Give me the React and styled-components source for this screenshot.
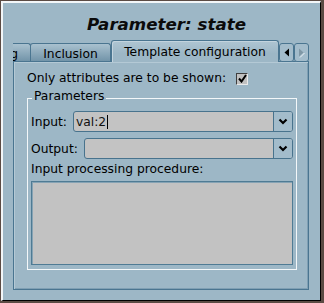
import styled, { createGlobalStyle } from "styled-components";

const GlobalStyle = createGlobalStyle`
  html, body {
    margin: 0;
    padding: 0;
    background: #5b4b44;
  }
  body {
    font-family: "DejaVu Sans", "Liberation Sans", sans-serif;
    color: #000;
  }
`;

export default function App() {
    return (
        <>
            <GlobalStyle />
            <Frame>
                <Dialog>
                    <Title>Parameter: state</Title>
                    <Notebook>
                        <TabRow>
                            <PartialTab>Rendering</PartialTab>
                            <Tab $w={81}>Inclusion</Tab>
                            <Tab $w={168} $active>Template configuration</Tab>
                            <ScrollButton>
                                <svg width="6" height="9" viewBox="0 0 6 9">
                                    <polygon points="5,0.5 5,8.5 0.5,4.5" fill="#000" />
                                </svg>
                            </ScrollButton>
                            <ScrollButton>
                                <svg width="7" height="10" viewBox="0 0 7 10">
                                    <polygon points="1,0.5 1,8.5 5.5,4.5" fill="#7f97a5" />
                                    <line x1="2" y1="9.5" x2="6.5" y2="5" stroke="#eef3f6" strokeWidth="1" />
                                </svg>
                            </ScrollButton>
                        </TabRow>
                        <Panel>
                            <CheckRow>
                                <span>Only attributes are to be shown:</span>
                                <CheckBox>
                                    <svg width="9" height="9" viewBox="0 0 9 9">
                                        <path d="M1 4.5 L3.5 7.5 L8 1" stroke="#000" strokeWidth="2" fill="none" />
                                    </svg>
                                </CheckBox>
                            </CheckRow>
                            <Group>
                                <Legend>Parameters</Legend>
                                <GroupBody>
                                    <FieldRow>
                                        <span>Input:</span>
                                        <Combo>
                                            <ComboEntry>
                                                val:2<Caret />
                                            </ComboEntry>
                                            <ComboButton>
                                                <Chevron />
                                            </ComboButton>
                                        </Combo>
                                    </FieldRow>
                                    <FieldRow>
                                        <span>Output:</span>
                                        <Combo>
                                            <ComboEntry />
                                            <ComboButton>
                                                <Chevron />
                                            </ComboButton>
                                        </Combo>
                                    </FieldRow>
                                    <Label>Input processing procedure:</Label>
                                    <TextArea />
                                </GroupBody>
                            </Group>
                        </Panel>
                    </Notebook>
                </Dialog>
            </Frame>
        </>
    );
}

function Chevron() {
    return (
        <svg width="10" height="7" viewBox="0 0 10 7">
            <path d="M1.5 1.5 L5 5 L8.5 1.5" stroke="#000" strokeWidth="2.2" fill="none" />
        </svg>
    );
}

const Frame = styled.div`
  width: 324px;
  height: 303px;
  box-sizing: border-box;
  padding: 1px 3px 2px 1px;
  background: #5b4b44;
`;

const Dialog = styled.div`
  height: 100%;
  box-sizing: border-box;
  border-top: 2px solid #f2f6f8;
  border-left: 2px solid #f2f6f8;
  border-right: 1px solid #000;
  border-bottom: 1px solid #000;
  background: #9db7c6;
  display: flex;
  flex-direction: column;
`;

const Title = styled.h1`
  margin: 0;
  padding: 11px 0 0 10px;
  height: 20px;
  line-height: 20px;
  text-align: center;
  font: italic bold 16.7px "DejaVu Sans", sans-serif;
  color: #0b0b0b;
`;

const Notebook = styled.div`
  margin: 6px 0 0 10px;
  width: 296px;
  display: flex;
  flex-direction: column;
`;

const TabRow = styled.div`
  display: flex;
  align-items: flex-end;
  height: 21px;
  position: relative;
  z-index: 1;
  font-size: 12.3px;
`;

const Tab = styled.div`
  box-sizing: border-box;
  width: ${(p) => p.$w}px;
  height: ${(p) => (p.$active ? 22 : 18)}px;
  margin-bottom: ${(p) => (p.$active ? -1 : 0)}px;
  margin-left: ${(p) => (p.$active ? 0 : -1)}px;
  padding-top: ${(p) => (p.$active ? 0 : 2)}px;
  border: 1px solid #4a7590;
  border-bottom: none;
  border-radius: 3px 3px 0 0;
  background: ${(p) =>
        p.$active
            ? "linear-gradient(#aec5d2, #9db7c6 60%)"
            : "linear-gradient(#a9c1cf, #7294a9)"};
  box-shadow: ${(p) => (p.$active ? "inset 1px 1px 0 #c3d4de" : "none")};
  display: flex;
  align-items: center;
  justify-content: center;
  white-space: nowrap;
  overflow: hidden;
`;

const PartialTab = styled.div`
  box-sizing: border-box;
  width: 18px;
  height: 18px;
  padding: 2px 12px 0 0;
  border: 1px solid #4a7590;
  border-left: none;
  border-bottom: none;
  border-radius: 0 3px 0 0;
  background: linear-gradient(#a9c1cf, #7294a9);
  display: flex;
  align-items: center;
  justify-content: flex-end;
  white-space: nowrap;
  overflow: hidden;
`;

const ScrollButton = styled.div`
  box-sizing: border-box;
  width: 15px;
  height: 19px;
  margin-bottom: -1px;
  border: 1px solid #4a7590;
  border-radius: 3px;
  background: #a3bccb;
  display: flex;
  align-items: center;
  justify-content: center;
`;

const Panel = styled.div`
  box-sizing: border-box;
  height: 229px;
  border: 1px solid #4a7590;
  box-shadow: inset 1px 1px 0 #b4c9d5, inset -1px -1px 0 #7f9fb3;
  padding: 9px 12px 0 13px;
  font-size: 12.3px;
`;

const CheckRow = styled.div`
  display: flex;
  align-items: center;
  gap: 10px;
  height: 15px;
  line-height: 15px;
`;

const CheckBox = styled.div`
  box-sizing: border-box;
  width: 12px;
  height: 12px;
  background: #c0c0c0;
  border-top: 1px solid #3f3f3f;
  border-left: 1px solid #3f3f3f;
  border-right: 1px solid #e9e9e9;
  border-bottom: 1px solid #e9e9e9;
  display: flex;
  align-items: center;
  justify-content: center;
`;

const Group = styled.fieldset`
  box-sizing: border-box;
  width: 270px;
  margin: 3px 0 0 0;
  padding: 3px 3px 4px 3px;
  border: 1px solid #f3f7f9;
  min-width: 0;
`;

const Legend = styled.legend`
  margin-left: 1px;
  padding: 0 2px 4px 2px;
  line-height: 15px;
`;

const GroupBody = styled.div`
  display: flex;
  flex-direction: column;
`;

const FieldRow = styled.div`
  display: flex;
  align-items: center;
  gap: 6px;
  height: 21px;
  margin-bottom: 6px;
`;

const Combo = styled.div`
  flex: 1;
  box-sizing: border-box;
  height: 21px;
  display: flex;
  border: 1px solid #48738d;
  border-radius: 3px;
  overflow: hidden;
  background: #c3c3c3;
`;

const ComboEntry = styled.div`
  flex: 1;
  padding-left: 2px;
  display: flex;
  align-items: center;
  color: #111;
`;

const Caret = styled.span`
  display: inline-block;
  width: 1px;
  height: 14px;
  margin-left: 1px;
  background: #000;
`;

const ComboButton = styled.div`
  width: 18px;
  border-left: 1px solid #48738d;
  background: #a3bccb;
  display: flex;
  align-items: center;
  justify-content: center;
`;

const Label = styled.div`
  margin-top: -3px;
  line-height: 15px;
`;

const TextArea = styled.div`
  box-sizing: border-box;
  height: 84px;
  margin-top: 4px;
  border: 1px solid #4f7b94;
  box-shadow: inset 1px 1px 0 #86a3b4;
  background: #c2c2c2;
`;
